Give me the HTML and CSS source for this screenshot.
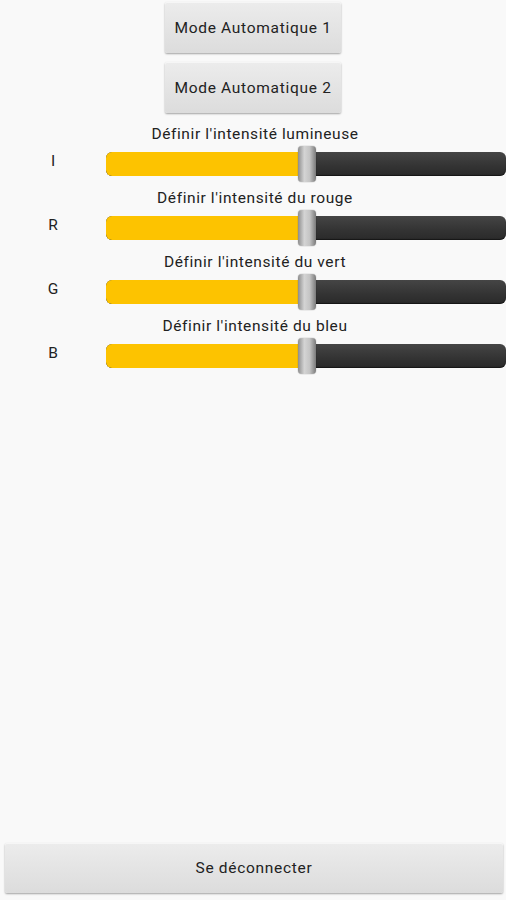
FILE: index.html
```html
<!DOCTYPE html>
<html lang="fr">
<head>
<meta charset="UTF-8">
<meta name="viewport" content="width=device-width, initial-scale=1.0">
<title>Contrôle LED</title>
<link rel="stylesheet" href="styles.css">
</head>
<body>

<div class="screen">

  <!-- Modes -->
  <div class="modes">
    <button class="btn mode-btn">Mode Automatique 1</button>
    <button class="btn mode-btn">Mode Automatique 2</button>
  </div>

  <!-- Sliders -->
  <div class="sliders">
    <div class="slider-block">
      <div class="slider-title">Définir l'intensité lumineuse</div>
      <div class="slider-row">
        <span class="channel">I</span>
        <div class="track">
          <div class="fill" style="width: 48.5%"></div>
          <div class="thumb" style="left: 48%"></div>
        </div>
      </div>
    </div>

    <div class="slider-block">
      <div class="slider-title">Définir l'intensité du rouge</div>
      <div class="slider-row">
        <span class="channel">R</span>
        <div class="track">
          <div class="fill" style="width: 48.5%"></div>
          <div class="thumb" style="left: 48%"></div>
        </div>
      </div>
    </div>

    <div class="slider-block">
      <div class="slider-title">Définir l'intensité du vert</div>
      <div class="slider-row">
        <span class="channel">G</span>
        <div class="track">
          <div class="fill" style="width: 48.5%"></div>
          <div class="thumb" style="left: 48%"></div>
        </div>
      </div>
    </div>

    <div class="slider-block">
      <div class="slider-title">Définir l'intensité du bleu</div>
      <div class="slider-row">
        <span class="channel">B</span>
        <div class="track">
          <div class="fill" style="width: 48.5%"></div>
          <div class="thumb" style="left: 48%"></div>
        </div>
      </div>
    </div>
  </div>

  <div class="spacer"></div>

  <button class="btn logout-btn">Se déconnecter</button>

</div>

</body>
</html>
```

FILE: styles.css
```css
html, body { margin: 0; padding: 0; }
body {
  font-family: Roboto, "Noto Sans", sans-serif;
  background: #f9f9f9;
  color: #222;
}
.screen {
  height: 900px;
  display: flex;
  flex-direction: column;
}

/* buttons */
.btn {
  font-family: inherit;
  font-size: 15.5px;
  letter-spacing: 0.7px;
  color: #222;
  border: none;
  border-radius: 2px;
  background: linear-gradient(#ececec, #dcdcdc);
  box-shadow: 0 1px 2px rgba(0,0,0,0.35), inset 0 1px 0 #f6f6f6;
  cursor: pointer;
}
.modes {
  display: flex;
  flex-direction: column;
  align-items: center;
  gap: 9px;
  padding-top: 2px;
}
.mode-btn { width: 176px; height: 51px; }

/* sliders */
.sliders { padding-top: 11px; }
.slider-block { height: 64px; }
.slider-title {
  text-align: center;
  font-size: 15.5px;
  letter-spacing: 0.6px;
  line-height: 20px;
  margin-left: 4px;
}
.slider-row {
  display: flex;
  align-items: center;
  height: 36px;
  margin-top: 2px;
}
.channel {
  width: 106px;
  flex-shrink: 0;
  text-align: center;
  font-size: 15.5px;
  padding-bottom: 6px;
}
.track {
  position: relative;
  flex: 1;
  height: 24px;
  border-radius: 6px;
  background: linear-gradient(#454545, #333 60%, #2a2a2a);
  box-shadow: inset 0 -1px 1px rgba(0,0,0,0.5);
}
.fill {
  height: 100%;
  border-radius: 6px 0 0 6px;
  background: #fdc300;
}
.thumb {
  position: absolute;
  top: -6px;
  width: 18px;
  height: 36px;
  border-radius: 4px;
  background: linear-gradient(90deg, #8d8d8d, #d4d4d4 35%, #c4c4c4 65%, #7a7a7a);
  box-shadow: 0 0 1px rgba(0,0,0,0.6);
}

.spacer { flex: 1; }

.logout-btn {
  margin: 0 3px 7px 5px;
  height: 50px;
}
```
